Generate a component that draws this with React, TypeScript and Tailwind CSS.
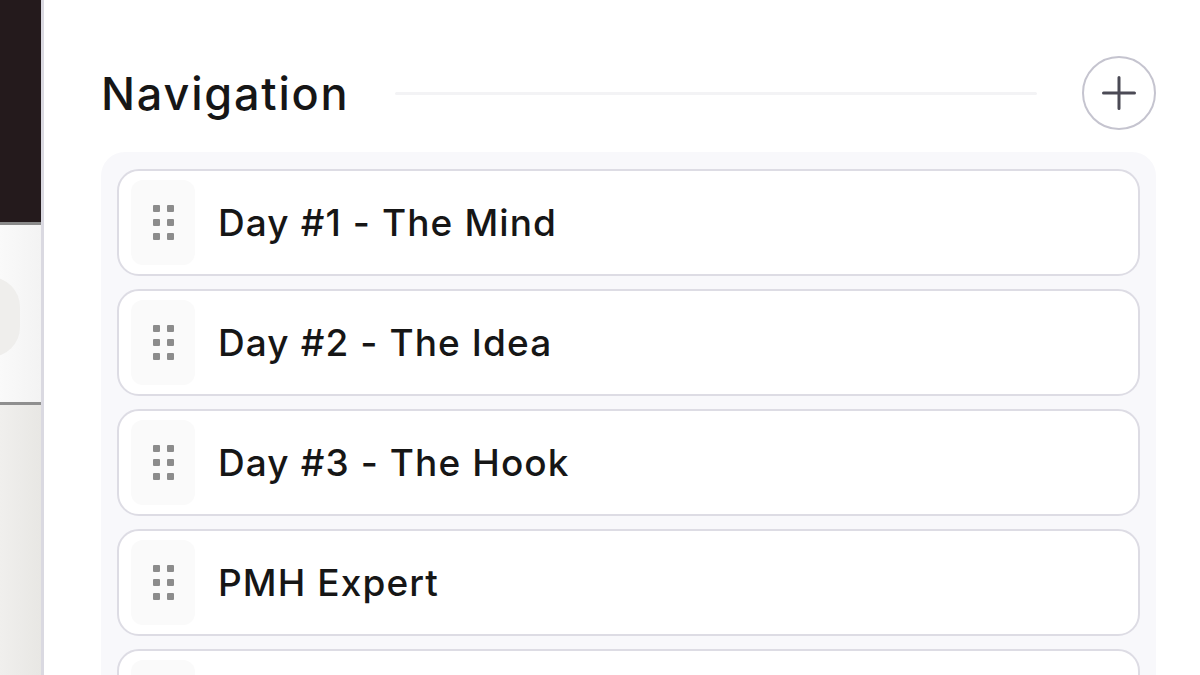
const items = ["Day #1 - The Mind", "Day #2 - The Idea", "Day #3 - The Hook", "PMH Expert", ""];

function DragDots() {
  return (
    <div className="grid grid-cols-2 gap-x-[7px] gap-y-[7px]">
      {Array.from({ length: 6 }).map((_, i) => (
        <span key={i} className="block h-[7px] w-[7px] rounded-[1px] bg-[#8c8c8c]" />
      ))}
    </div>
  );
}

function NavItem({ label }: { label: string }) {
  return (
    <div className="flex h-[107px] shrink-0 items-center gap-[23px] rounded-[22px] border-2 border-[#dddce4] bg-white px-[12px]">
      <div className="flex h-[85px] w-[64px] items-center justify-center rounded-[12px] bg-[#fafafa]">
        {label && <DragDots />}
      </div>
      <span className="text-[37px] font-medium tracking-[1.1px] text-[#161616]">{label}</span>
    </div>
  );
}

export default function App() {
  return (
    <div
      className="flex h-[675px] w-[1200px] overflow-hidden bg-white"
      style={{ fontFamily: "Inter, 'Noto Sans', sans-serif" }}
    >
      {/* left strip, cut off window behind */}
      <div className="flex w-[44px] shrink-0 flex-col border-r-[3px] border-[#dad9e1]">
        <div className="h-[222px] bg-[#241a1c]" />
        <div className="h-[3px] bg-[#8a8a8a]" />
        <div className="relative h-[177px] overflow-hidden bg-gradient-to-r from-[#fafafa] to-[#f3f3f3]">
          <div className="absolute left-[-40px] top-[52px] h-[80px] w-[60px] rounded-full bg-[#efeeec]" />
        </div>
        <div className="h-[3px] bg-[#8f8f8f]" />
        <div className="flex-1 bg-gradient-to-r from-[#f0efed] to-[#e8e7e4]" />
      </div>

      {/* main panel */}
      <div className="flex flex-1 flex-col pl-[57px] pr-[44px] pt-[56px]">
        <div className="flex h-[74px] items-center">
          <h2 className="text-[45px] font-medium leading-none tracking-[1.8px] text-[#161616]">Navigation</h2>
          <div className="ml-[46px] mr-[45px] h-[3px] flex-1 rounded-full bg-[#f3f3f5]" />
          <button className="flex h-[74px] w-[74px] items-center justify-center rounded-full border-2 border-[#c5c4cf] bg-white text-[#4b4a55]">
            <svg width="34" height="34" viewBox="0 0 34 34" fill="none" stroke="currentColor" strokeWidth="3" strokeLinecap="round">
              <path d="M17 1.5v31M1.5 17h31" />
            </svg>
          </button>
        </div>

        <div className="mt-[22px] flex flex-1 flex-col gap-[13px] rounded-t-[24px] bg-[#f8f8fb] px-[16px] pt-[17px]">
          {items.map((label, i) => (
            <NavItem key={i} label={label} />
          ))}
        </div>
      </div>
    </div>
  );
}
